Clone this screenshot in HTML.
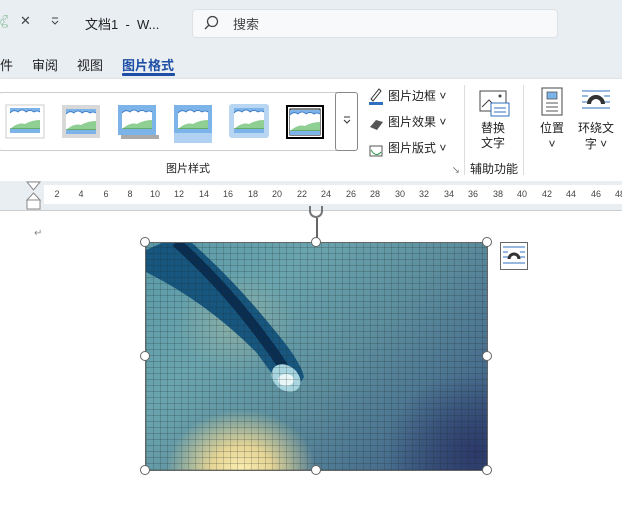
<!DOCTYPE html>
<html><head><meta charset="utf-8"><style>
*{margin:0;padding:0;box-sizing:border-box}
body{width:622px;height:507px;overflow:hidden;background:#fff;font-family:"Liberation Sans","Noto Sans CJK SC",sans-serif;position:relative;color:#222}
.a{position:absolute;white-space:nowrap}
.t{font-size:13px}
.h{position:absolute;width:10px;height:10px;border-radius:50%;background:#fff;border:1.5px solid #666}
.r{position:absolute;top:189px;font-size:9px;color:#444;width:20px;text-align:center}
</style></head><body>
<div class="a" style="left:0;top:0;width:622px;height:79px;background:#e9eef3"></div>
<div class="a" style="left:0;top:12px;width:8px;height:20px;color:#2a8a3a;font-size:14px;overflow:hidden">♲</div>
<div class="a t" style="left:20px;top:13px;color:#444">✕</div>
<svg class="a" style="left:50px;top:17px" width="10" height="8"><path d="M2 1h6M2 4l3 3 3-3" stroke="#444" fill="none"/></svg>
<div class="a t" style="left:85px;top:14px">文档1 &nbsp;- &nbsp;W...</div>
<div class="a" style="left:192px;top:9px;width:366px;height:29px;background:#f8f9fb;border:1px solid #dde1e6;border-radius:4px"></div>
<svg class="a" style="left:203px;top:15px" width="16" height="16"><circle cx="9.5" cy="6.5" r="5" fill="none" stroke="#444" stroke-width="1.3"/><path d="M6 10 L2 14" stroke="#444" stroke-width="1.3"/></svg>
<div class="a t" style="left:233px;top:14px;color:#444">搜索</div>
<div class="a t" style="left:0;top:55px">件</div>
<div class="a t" style="left:32px;top:55px">审阅</div>
<div class="a t" style="left:77px;top:55px">视图</div>
<div class="a t" style="left:122px;top:55px;color:#1e4fa6;font-weight:bold">图片格式</div>
<div class="a" style="left:122px;top:73px;width:53px;height:3px;background:#1e4fa6;border-radius:1px"></div>
<div class="a" style="left:0;top:79px;width:622px;height:102px;background:#fff;box-shadow:0 1px 3px #bbb"></div>
<div class="a" style="left:-2px;top:92px;width:360px;height:59px;border:1px solid #ccc;border-radius:4px"></div>
<div class="a" style="left:335px;top:92px;width:23px;height:59px;border:1px solid #888;border-radius:3px;background:#fff"></div>
<svg class="a" style="left:342px;top:115px" width="10" height="10"><path d="M2 2h6M2 5l3 3 3-3" stroke="#333" fill="none"/></svg>
<svg class="a" style="left:0;top:100px" width="335" height="45">
<defs><g id="p"><rect x="0" y="0" width="30" height="25" fill="#fff"/><path d="M0 5 Q4 1 8 4 Q12 0 16 4 Q20 1 24 4 Q27 2 30 4 L30 0 L0 0Z" fill="#7cb3e8"/><path d="M0 5 Q4 1 8 4 Q12 0 16 4 Q20 1 24 4 Q27 2 30 4" fill="none" stroke="#2e6fc0" stroke-width="0.8"/><path d="M0 21 Q8 14 15 16 Q22 12 30 12 L30 21Z" fill="#8fcf94"/><path d="M0 21 L30 21" stroke="#3a8a3a"/><rect x="0" y="21" width="30" height="4" fill="#7cb3e8"/></g></defs>
<rect x="6" y="5" width="38" height="33" fill="#fff" stroke="#ccc"/><use href="#p" x="10" y="8"/>
<rect x="62" y="5" width="38" height="33" fill="#d8d8d8"/><use href="#p" x="66" y="9"/>
<rect x="118" y="5" width="38" height="30" fill="#7cb3e8"/><rect x="121" y="35" width="38" height="4" fill="#aaa"/><use href="#p" x="122" y="8"/>
<rect x="174" y="5" width="38" height="38" fill="#7cb3e8" opacity=".6"/><rect x="174" y="5" width="38" height="28" fill="#7cb3e8"/><use href="#p" x="178" y="8"/>
<rect x="229" y="4" width="40" height="34" rx="3" fill="#b8d6f2"/><use href="#p" x="234" y="8"/>
<rect x="287" y="6" width="36" height="32" fill="#fff" stroke="#000" stroke-width="2"/><rect x="290" y="9" width="30" height="26" fill="none" stroke="#000"/><use href="#p" x="290" y="10"/>
</svg>
<div class="a" style="left:166px;top:160px;font-size:11px">图片样式</div>
<div class="a" style="left:452px;top:165px;font-size:8px;color:#555">↘</div>
<svg class="a" style="left:368px;top:86px" width="16" height="72"><path d="M3 13 L11 3 L13 5 L5 15Z" fill="#fff" stroke="#333"/><rect x="1" y="16" width="14" height="3" fill="#2e6fc0"/><path d="M2 41 L8 34 L15 36 L9 44Z" fill="#555"/><rect x="2" y="60" width="12" height="10" fill="none" stroke="#555"/><path d="M3 64 Q8 72 13 66" stroke="#2a9a4a" fill="none"/></svg>
<div class="a" style="left:388px;top:87px;font-size:12px">图片边框 ˅</div>
<div class="a" style="left:388px;top:113px;font-size:12px">图片效果 ˅</div>
<div class="a" style="left:388px;top:139px;font-size:12px">图片版式 ˅</div>
<div class="a" style="left:464px;top:85px;width:1px;height:90px;background:#ddd"></div>
<div class="a" style="left:523px;top:85px;width:1px;height:90px;background:#ddd"></div>
<svg class="a" style="left:478px;top:89px" width="34" height="30"><rect x="2" y="2" width="26" height="20" fill="#fff" stroke="#444"/><path d="M4 18 L11 11 L16 16" stroke="#444" fill="none"/><circle cx="22" cy="7" r="1.5" fill="#444"/><rect x="13" y="14" width="18" height="13" fill="#fff" stroke="#2e6fc0"/><path d="M16 19h12M16 23h12" stroke="#2e6fc0"/></svg>
<div class="a" style="left:481px;top:121px;font-size:12px;line-height:15px;text-align:center">替换<br>文字</div>
<div class="a" style="left:470px;top:160px;font-size:12px">辅助功能</div>
<svg class="a" style="left:540px;top:87px" width="26" height="30"><rect x="2" y="1" width="20" height="27" fill="#fff" stroke="#444"/><rect x="7" y="5" width="10" height="7" fill="#7cb3e8" stroke="#444" stroke-width=".7"/><path d="M6 16h12M6 20h12M6 24h12" stroke="#555"/></svg>
<div class="a" style="left:540px;top:120px;font-size:12px;line-height:16px;text-align:center">位置<br>˅</div>
<svg class="a" style="left:580px;top:88px" width="32" height="26"><path d="M2 3h28M2 8h6M24 8h6M2 14h6M24 14h6M2 20h28" stroke="#2e6fc0"/><path d="M9 16 A7 7 0 0 1 23 16" stroke="#333" stroke-width="4" fill="none"/></svg>
<div class="a" style="left:578px;top:120px;font-size:12px;line-height:16px;text-align:center">环绕文<br>字 ˅</div>
<div class="a" style="left:0;top:181px;width:622px;height:29px;background:#e9eef3"></div>
<div class="a" style="left:44px;top:185px;width:578px;height:19px;background:#fff"></div>
<svg class="a" style="left:26px;top:181px" width="16" height="30"><path d="M1 1h13L7.5 9Z" fill="#fff" stroke="#888"/><path d="M7.5 12 L14 19 H1Z" fill="#fff" stroke="#888"/><rect x="1" y="19" width="13" height="9" fill="#fff" stroke="#888"/></svg>
<div class="r" style="left:47px">2</div><div class="r" style="left:71px">4</div><div class="r" style="left:96px">6</div><div class="r" style="left:120px">8</div><div class="r" style="left:145px">10</div><div class="r" style="left:169px">12</div><div class="r" style="left:194px">14</div><div class="r" style="left:218px">16</div><div class="r" style="left:243px">18</div><div class="r" style="left:267px">20</div><div class="r" style="left:292px">22</div><div class="r" style="left:316px">24</div><div class="r" style="left:341px">26</div><div class="r" style="left:365px">28</div><div class="r" style="left:390px">30</div><div class="r" style="left:414px">32</div><div class="r" style="left:439px">34</div><div class="r" style="left:463px">36</div><div class="r" style="left:488px">38</div><div class="r" style="left:512px">40</div><div class="r" style="left:537px">42</div><div class="r" style="left:561px">44</div><div class="r" style="left:586px">46</div><div class="r" style="left:610px">48</div>
<div class="a" style="left:0;top:210px;width:622px;height:1px;background:#ccc"></div>
<div class="a" style="left:34px;top:228px;font-size:10px;color:#888">↵</div>
<div class="a" style="left:146px;top:242px;width:341px;height:228px;overflow:hidden;background:
radial-gradient(ellipse 75px 60px at 95px 228px,#fbeeb0 0%,#e5d596 40%,rgba(200,200,150,0) 100%),
radial-gradient(ellipse 90px 80px at 330px 210px,#2c3a6a 0%,rgba(44,58,106,0) 100%),
radial-gradient(ellipse 60px 50px at 90px 80px,rgba(160,180,160,.6),rgba(160,180,160,0)),
linear-gradient(135deg,#5a9aa8 0%,#6aa4ae 30%,#5d8f9e 55%,#49708f 80%,#37527a 100%)">
<svg style="position:absolute;left:0;top:0" width="341" height="228"><path d="M0 8 L18 0 L45 0 Q90 40 130 90 Q155 120 158 135 Q150 150 135 145 Q125 130 110 110 Q60 60 0 30Z" fill="#17577f"/><path d="M30 0 Q80 45 120 100 Q135 120 140 130" stroke="#0a2e52" stroke-width="10" fill="none"/><ellipse cx="140" cy="136" rx="16" ry="12" fill="#a8d6e0" transform="rotate(40 140 136)"/><ellipse cx="140" cy="138" rx="8" ry="6" fill="#e8f6f8"/></svg>
<div style="position:absolute;inset:0;background:repeating-linear-gradient(0deg,rgba(30,40,40,.22) 0 1px,transparent 1px 6px),repeating-linear-gradient(90deg,rgba(30,40,40,.2) 0 1px,transparent 1px 7px)"></div>
</div>
<div class="a" style="left:145px;top:242px;width:343px;height:229px;border:1.5px solid #666"></div>
<div class="a" style="left:316px;top:218px;width:1.5px;height:24px;background:#666"></div>
<div class="a" style="left:309px;top:206px;width:14px;height:12px;border:2px solid #777;border-top:none;border-radius:0 0 8px 8px"></div>
<div class="h" style="left:140px;top:237px"></div><div class="h" style="left:311px;top:237px"></div><div class="h" style="left:482px;top:237px"></div>
<div class="h" style="left:140px;top:351px"></div><div class="h" style="left:482px;top:351px"></div>
<div class="h" style="left:140px;top:465px"></div><div class="h" style="left:311px;top:465px"></div><div class="h" style="left:482px;top:465px"></div>
<svg class="a" style="left:500px;top:242px" width="28" height="28"><rect x=".5" y=".5" width="27" height="27" fill="#fff" stroke="#666"/><path d="M3 5h22M3 10h5M20 10h5M3 15h5M20 15h5M3 21h22" stroke="#2e6fc0"/><path d="M9 17 A5 5 0 0 1 19 17" stroke="#333" stroke-width="3" fill="none"/></svg>
</body></html>
